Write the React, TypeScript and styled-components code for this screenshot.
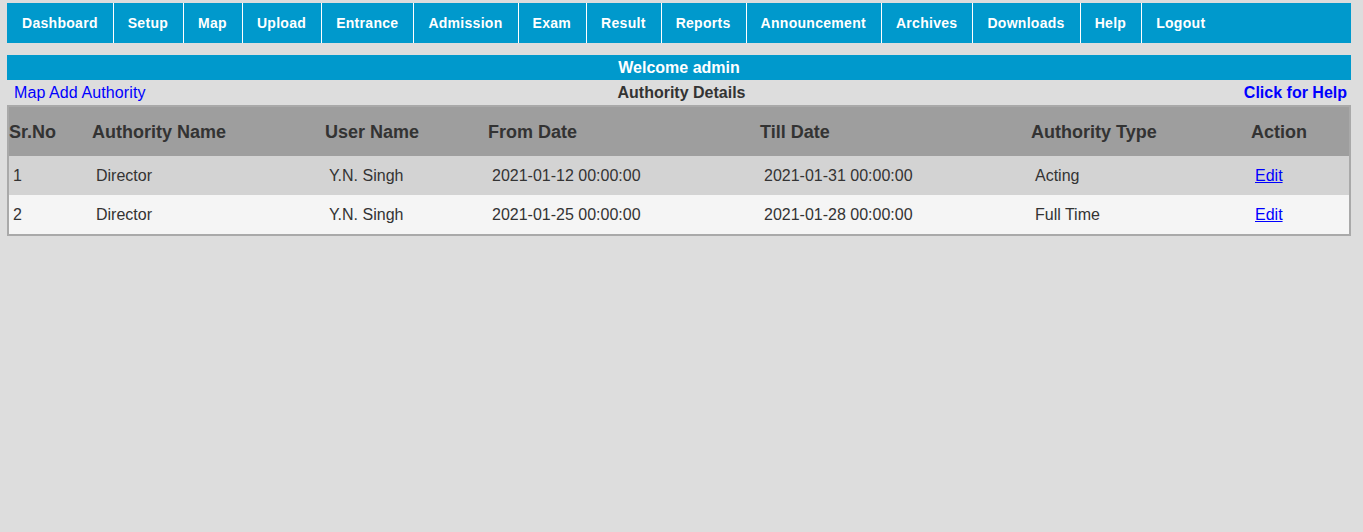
import React from "react";
import styled, { createGlobalStyle } from "styled-components";

const Global = createGlobalStyle`
  html, body { margin: 0; padding: 0; background: #dddddd; }
  body { font-family: "Liberation Sans", Arial, sans-serif; color: #333; }
`;

const Page = styled.div`
  padding: 3px 12px 0 7px;
`;

const Nav = styled.ul`
  display: flex;
  list-style: none;
  margin: 0;
  padding: 0;
  height: 40px;
  background: #0099cc;
`;

const NavItem = styled.li<{ $first?: boolean }>`
  display: flex;
  align-items: center;
  padding: 0 15px 0 ${(p) => (p.$first ? 15 : 14)}px;
  border-left: ${(p) => (p.$first ? "none" : "1px solid #ffffff")};
  color: #ffffff;
  font-weight: bold;
  font-size: 14px;
  letter-spacing: 0.29px;
  white-space: nowrap;
`;

const WelcomeBar = styled.div`
  margin-top: 12px;
  height: 25px;
  background: #0099cc;
  color: #fff;
  font-weight: bold;
  font-size: 16px;
  display: flex;
  align-items: center;
  justify-content: center;
`;

const SubBar = styled.div`
  height: 25px;
  display: grid;
  grid-template-columns: 1fr auto 1fr;
  align-items: center;
  padding: 0 4px 0 7px;
  font-size: 16px;
`;

const PlainLink = styled.a`
  color: #0000ff;
  text-decoration: none;
  letter-spacing: 0.1px;
  cursor: pointer;
`;

const Title = styled.div`
  font-weight: bold;
  color: #333;
  padding-left: 2px;
`;

const HelpLink = styled(PlainLink)`
  font-weight: bold;
  letter-spacing: 0;
  justify-self: end;
`;

const Table = styled.table`
  width: 100%;
  border-collapse: collapse;
  border: 2px solid #a9a9a9;
  table-layout: fixed;
`;

const HeadRow = styled.tr`
  background: #9e9e9e;
`;

const Th = styled.th`
  text-align: left;
  padding: 15px 0 13px;
  line-height: 21px;
  font-size: 18px;
  font-weight: bold;
  color: #333;
`;

const Row = styled.tr<{ $alt?: boolean }>`
  background: ${(p) => (p.$alt ? "#f5f5f5" : "#d3d3d3")};
`;

const Td = styled.td`
  padding: 10px 4px;
  line-height: 19px;
  font-size: 16px;
  color: #333;
`;

const EditLink = styled.a`
  color: #0000ff;
  text-decoration: underline;
  cursor: pointer;
`;

const navItems = [
  "Dashboard", "Setup", "Map", "Upload", "Entrance", "Admission", "Exam",
  "Result", "Reports", "Announcement", "Archives", "Downloads", "Help", "Logout",
];

const cols: { label: string; w?: number }[] = [
  { label: "Sr.No", w: 84 },
  { label: "Authority Name", w: 233 },
  { label: "User Name", w: 163 },
  { label: "From Date", w: 272 },
  { label: "Till Date", w: 271 },
  { label: "Authority Type", w: 220 },
  { label: "Action" },
];

const rows = [
  ["1", "Director", "Y.N. Singh", "2021-01-12 00:00:00", "2021-01-31 00:00:00", "Acting"],
  ["2", "Director", "Y.N. Singh", "2021-01-25 00:00:00", "2021-01-28 00:00:00", "Full Time"],
];

export default function App() {
  return (
    <Page>
      <Global />
      <Nav>
        {navItems.map((n, i) => (
          <NavItem key={n} $first={i === 0}>{n}</NavItem>
        ))}
      </Nav>
      <WelcomeBar>Welcome admin</WelcomeBar>
      <SubBar>
        <PlainLink>Map Add Authority</PlainLink>
        <Title>Authority Details</Title>
        <HelpLink>Click for Help</HelpLink>
      </SubBar>
      <Table>
        <colgroup>
          {cols.map((c) => (
            <col key={c.label} style={c.w ? { width: c.w } : undefined} />
          ))}
        </colgroup>
        <thead>
          <HeadRow>
            {cols.map((c) => (
              <Th key={c.label}>{c.label}</Th>
            ))}
          </HeadRow>
        </thead>
        <tbody>
          {rows.map((r, i) => (
            <Row key={i} $alt={i % 2 === 1}>
              {r.map((c, j) => (
                <Td key={j}>{c}</Td>
              ))}
              <Td><EditLink>Edit</EditLink></Td>
            </Row>
          ))}
        </tbody>
      </Table>
    </Page>
  );
}
